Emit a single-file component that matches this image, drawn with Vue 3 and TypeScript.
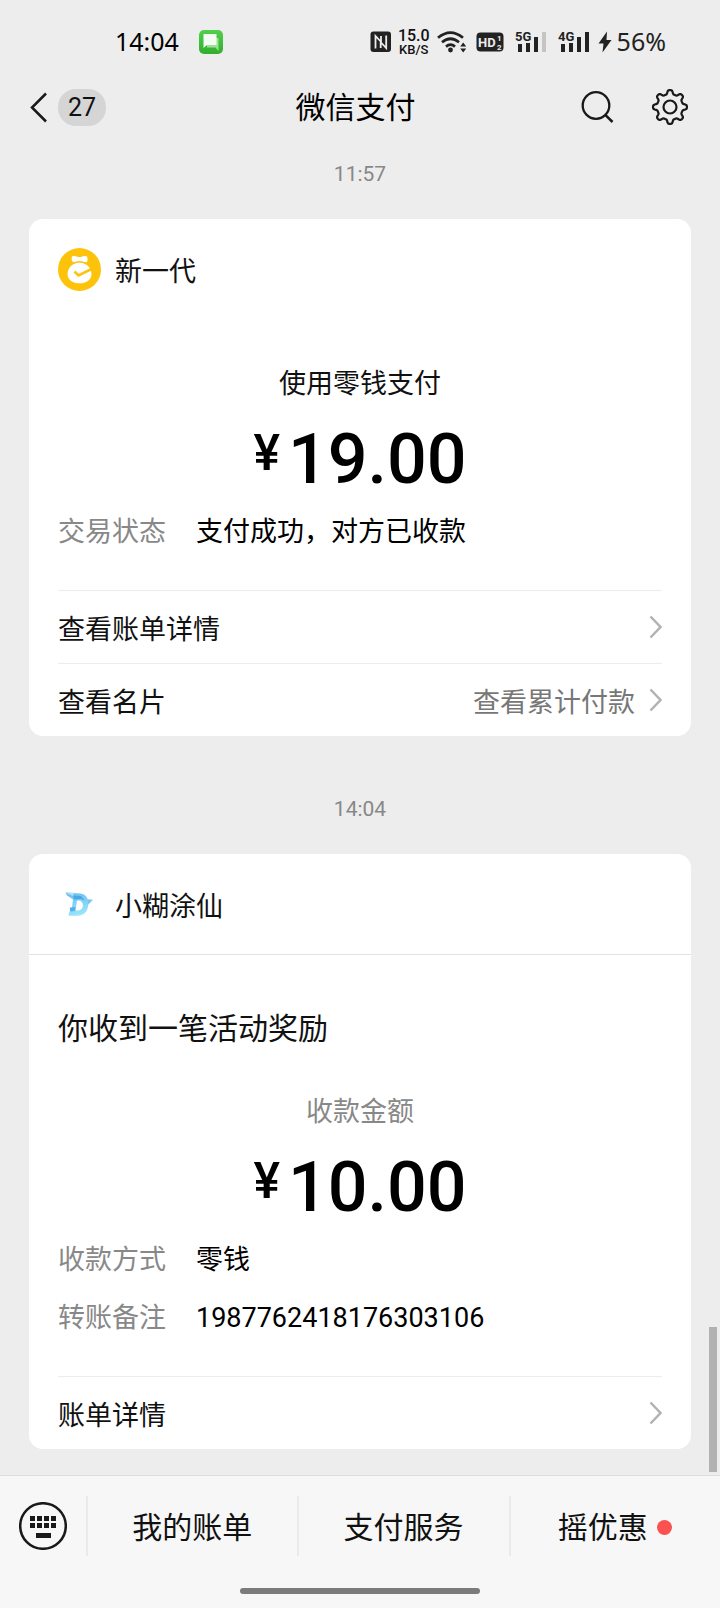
<script setup lang="ts">
interface Detail {
  label: string
  value: string
}

const receiptDetails: Detail[] = [
  { label: '收款方式', value: '零钱' },
  { label: '转账备注', value: '1987762418176303106' },
]

// Eight soft teeth around a circle centred on (20, 20).
const gearPath: string = (() => {
  const steps = 192
  const points: string[] = []
  for (let i = 0; i < steps; i++) {
    const a = (i / steps) * Math.PI * 2
    const r = 15 + 2.1 * Math.tanh(2 * (Math.cos(a * 8) - 0.15))
    points.push(`${(20 + r * Math.sin(a)).toFixed(2)} ${(20 - r * Math.cos(a)).toFixed(2)}`)
  }
  return `M${points.join('L')}Z`
})()

const keys: number[] = [0, 1, 2, 3]
</script>

<template>
  <div class="page">
    <div class="status">
      <span class="clock">14:04</span>
      <svg class="chat-badge" viewBox="0 0 24 24" width="24" height="24" aria-hidden="true">
        <defs>
          <linearGradient id="badge" x1="0" y1="0" x2="0" y2="1">
            <stop offset="0" stop-color="#52cf4c" />
            <stop offset="1" stop-color="#32ae2e" />
          </linearGradient>
        </defs>
        <rect width="24" height="24" rx="5" fill="url(#badge)" />
        <path d="M8 8h11.500v13l-3-3.500H8z" fill="#9be298" />
        <path d="M4.500 4h13v11H8l-3.500 3z" fill="#f3fdf3" />
      </svg>
      <div class="signals">
        <svg viewBox="0 0 22 22" width="22" height="22" aria-hidden="true">
          <rect x="0.500" y="0.500" width="20.500" height="20.500" rx="3" fill="#222" />
          <path d="M5.500 17.500V5l5.200 5.500V17M16.200 4.500V17L11 11.500V5" fill="none" stroke="#ededed" stroke-width="1.800" />
        </svg>
        <span class="speed"><span>15.0</span><span class="unit">KB/S</span></span>
        <svg viewBox="0 0 30 24" width="30" height="24" aria-hidden="true">
          <g fill="none" stroke="#222" stroke-width="2.700">
            <path d="M1 7.800Q13.500-2.500 26 7.800" />
            <path d="M5 12.300Q13.500 5.200 22 12.300" />
            <path d="M9 16.600Q13.500 12.800 18 16.600" />
          </g>
          <circle cx="13.500" cy="20" r="2.400" fill="#222" />
          <path d="M23.200 16.500l3-4 3 4zM23.200 18.500l3 4 3-4z" fill="#222" />
        </svg>
        <svg class="hd" viewBox="0 0 28 20" width="28" height="20" aria-hidden="true">
          <rect x="0.500" y="0.500" width="27" height="19" rx="4" fill="#222" />
          <text x="2" y="15" font-size="13" font-weight="700" fill="#ededed">HD</text>
          <text x="21" y="9" font-size="8" font-weight="700" fill="#ededed">1</text>
          <text x="21" y="18" font-size="8" font-weight="700" fill="#ededed">2</text>
        </svg>
        <svg class="bars" viewBox="0 -2 32 28" width="32" height="28" aria-hidden="true">
          <text x="0" y="11" font-size="13" font-weight="700" fill="#222">5G</text>
          <path d="M3 14h4v8h-4zM11 13h4v9h-4zM19 7h4v15h-4z" fill="#222" />
          <path d="M27 2h4v20h-4z" fill="#c4c4c4" />
        </svg>
        <svg class="bars" viewBox="0 -2 32 28" width="32" height="28" aria-hidden="true">
          <text x="0" y="11" font-size="13" font-weight="700" fill="#222">4G</text>
          <path d="M3 14h4v8h-4zM11 13h4v9h-4zM19 7h4v15h-4zM27 2h4v20h-4z" fill="#222" />
        </svg>
        <svg class="bolt" viewBox="0 0 14 22" width="14" height="22" aria-hidden="true">
          <path d="M9 0.500L0.500 12.500h5l-1 9L13.500 9H8.500z" fill="#222" />
        </svg>
        <span class="battery">56%</span>
      </div>
    </div>

    <header class="nav">
      <button class="back" type="button" aria-label="返回">
        <svg viewBox="0 0 18 32" width="18" height="32" aria-hidden="true">
          <path d="M17 2.500L3 16.500l14 14" fill="none" stroke="#191919" stroke-width="2.500" />
        </svg>
        <span class="count">27</span>
      </button>
      <h1>微信支付</h1>
      <div class="tools">
        <button type="button" aria-label="搜索">
          <svg viewBox="0 0 40 40" width="40" height="40" aria-hidden="true">
            <circle cx="18" cy="18.500" r="13.300" fill="none" stroke="#191919" stroke-width="2.300" />
            <path d="M27.300 27.800l7.200 7.200" stroke="#191919" stroke-width="2.500" />
          </svg>
        </button>
        <button type="button" aria-label="设置">
          <svg viewBox="0 0 40 40" width="40" height="40" aria-hidden="true">
            <path :d="gearPath" fill="none" stroke="#191919" stroke-width="2.200" stroke-linejoin="round" />
            <circle cx="20" cy="20" r="6.500" fill="none" stroke="#191919" stroke-width="2.200" />
          </svg>
        </button>
      </div>
    </header>

    <main class="chat">
      <time class="stamp">11:57</time>
      <article class="card">
        <div class="head">
          <svg viewBox="0 0 43 43" width="43" height="43" aria-hidden="true">
            <circle cx="21.500" cy="21.500" r="21.500" fill="#fdc30a" />
            <path d="M14 8.500c2.500-1.500 5 .6 7.300.6s5-2 7.700-.6c.8 1.700.8 4 0 5.600-2.500.9-4-.9-7.500-.9s-4.500 1.700-6.800.6c-1.200-1.600-1.300-3.700-.7-5.300z" fill="#fff" />
            <path d="M21.500 14.500c6 0 12 5 12 11.500 0 6-5.500 9.300-12 9.300s-12-3.300-12-9.300c0-6.500 6-11.500 12-11.500z" fill="#fff" />
            <path d="M14.500 15.500Q21.500 12 28.500 15.500" fill="none" stroke="#fdc30a" stroke-width="1.200" />
            <path d="M16.500 23.500l4 4L33.500 21" fill="none" stroke="#fdc30a" stroke-width="2.600" />
          </svg>
          <h2>新一代</h2>
        </div>
        <div class="body">
          <p class="caption">使用零钱支付</p>
          <p class="amount"><span class="yen">¥</span><span>19.00</span></p>
          <dl>
            <div class="detail"><dt>交易状态</dt><dd>支付成功，对方已收款</dd></div>
          </dl>
          <div class="links">
            <button class="link" type="button">
              <span class="name">查看账单详情</span>
              <svg viewBox="0 0 14 24" width="14" height="24" aria-hidden="true"><path d="M2.500 1.500L12.500 12 2.500 22.500" /></svg>
            </button>
            <button class="link" type="button">
              <span class="name">查看名片</span>
              <span class="extra">查看累计付款</span>
              <svg viewBox="0 0 14 24" width="14" height="24" aria-hidden="true"><path d="M2.500 1.500L12.500 12 2.500 22.500" /></svg>
            </button>
          </div>
        </div>
      </article>

      <time class="stamp later">14:04</time>
      <article class="card">
        <div class="head">
          <svg viewBox="0 0 43 43" width="43" height="43" aria-hidden="true">
            <defs>
              <linearGradient id="ice" x1="0" y1="0" x2="0.300" y2="1">
                <stop offset="0" stop-color="#68bdf0" />
                <stop offset="1" stop-color="#98e4fc" />
              </linearGradient>
            </defs>
            <path fill-rule="evenodd" fill="url(#ice)" d="M7.500 9.500L22 10.500c4 .3 6.500 2.500 7.800 5.800l5 .5-4.600 5c-.3 7-4.500 11-11.200 11h-8.500l.8-4.300 2.200-.5 1.500-11.500-6-4zM19 17.500l-1.500 9.700c5.200 1 7.400-1.700 7.400-5.300 0-3-2.200-4.900-5.900-4.400z" />
            <path d="M7.500 9.500l8.500.2-1 3.200z" fill="#b4e1fa" />
            <path d="M12 24.500l5.500-.5-.5 4-5 .5z" fill="#52b0ee" />
            <path d="M15 12.500l8 .5 4 4.500-4-1.500-7 .5z" fill="#4aa8e6" />
            <path d="M29.500 17l5.300-.2-4.800 4.500z" fill="#7cc3f0" />
          </svg>
          <h2>小糊涂仙</h2>
        </div>
        <div class="body ruled">
          <h3>你收到一笔活动奖励</h3>
          <p class="caption muted">收款金额</p>
          <p class="amount"><span class="yen">¥</span><span>10.00</span></p>
          <dl>
            <div v-for="item in receiptDetails" :key="item.label" class="detail">
              <dt>{{ item.label }}</dt>
              <dd>{{ item.value }}</dd>
            </div>
          </dl>
          <div class="links">
            <button class="link" type="button">
              <span class="name">账单详情</span>
              <svg viewBox="0 0 14 24" width="14" height="24" aria-hidden="true"><path d="M2.500 1.500L12.500 12 2.500 22.500" /></svg>
            </button>
          </div>
        </div>
      </article>
      <div class="thumb"></div>
    </main>

    <footer class="dock">
      <nav class="menu">
        <button class="keyboard" type="button" aria-label="键盘">
          <svg viewBox="0 0 48 48" width="48" height="48" aria-hidden="true">
            <circle cx="24" cy="24" r="22.800" fill="none" stroke="#191919" stroke-width="2.500" />
            <g fill="#191919">
              <rect v-for="k in keys" :key="'t' + k" :x="11 + k * 7" y="14" width="5" height="5" />
              <rect v-for="k in keys" :key="'b' + k" :x="11 + k * 7" y="21" width="5" height="5" />
              <rect x="17" y="31" width="15" height="5" />
            </g>
          </svg>
        </button>
        <button class="tab" type="button">我的账单</button>
        <button class="tab" type="button">支付服务</button>
        <button class="tab" type="button">摇优惠<span class="dot"></span></button>
      </nav>
      <div class="home"></div>
    </footer>
  </div>
</template>

<style>
html,
body {
  background: #ededed;
}
</style>

<style scoped>
.page {
  display: flex;
  flex-direction: column;
  min-height: 100vh;
  background: #ededed;
  color: #111;
  font-family: Roboto, "Noto Sans CJK SC", sans-serif;
  font-size: 27px;
  line-height: 36px;
}

h1,
h2,
h3,
p,
dl,
dd {
  margin: 0;
  font-size: inherit;
  font-weight: 400;
}

svg {
  display: block;
  flex: none;
}

button {
  margin: 0;
  padding: 0;
  border: 0;
  background: none;
  color: inherit;
  font: inherit;
  cursor: pointer;
}

.status {
  display: flex;
  align-items: center;
  height: 51px;
  padding: 16px 54px 0 115px;
  color: #111;
}

.clock,
.battery {
  padding-bottom: 2px;
  font-family: "Noto Sans", sans-serif;
  font-size: 25px;
}

.clock {
  color: #000;
}

.chat-badge {
  margin-left: 20px;
}

.signals {
  display: flex;
  flex: 1;
  align-items: center;
  justify-content: flex-end;
}

.speed {
  display: flex;
  flex-direction: column;
  align-items: center;
  margin: 0 7px 0 6px;
  font-size: 16px;
  font-weight: 500;
  line-height: 15px;
}

.unit {
  font-size: 13px;
  line-height: 13px;
}

.hd {
  margin-left: 9px;
}

.bars {
  margin-left: 11px;
}

.bolt {
  margin: 0 5px 0 8px;
}

.battery {
  color: #222;
}

.nav {
  display: grid;
  grid-template-columns: 1fr auto 1fr;
  align-items: center;
  height: 80px;
  padding: 0 30px 0 29px;
}

.back {
  display: flex;
  align-items: center;
  gap: 11px;
}

.count {
  padding: 1px 10px 0;
  border-radius: 18px;
  background: #d5d5d5;
  font-size: 25px;
}

.nav h1 {
  padding: 2px 8px 0 0;
  color: #000;
  font-size: 30px;
}

.tools {
  display: flex;
  justify-content: flex-end;
  gap: 32px;
}

.chat {
  position: relative;
  flex: 1;
  padding: 14px 29px 26px;
}

.stamp {
  display: block;
  margin-bottom: 32px;
  color: #888;
  font-size: 21px;
  line-height: 26px;
  text-align: center;
}

.later {
  margin-top: 60px;
}

.card {
  overflow: hidden;
  border-radius: 14px;
  background: #fff;
}

.head {
  display: flex;
  align-items: center;
  gap: 14px;
  height: 100px;
  padding: 0 29px;
}

.head h2,
.name,
.extra {
  padding-top: 6px;
}

.body {
  padding: 47px 29px 0;
}

.ruled {
  padding-top: 56px;
  border-top: 1px solid #e3e3e3;
}

.ruled h3 {
  margin-bottom: 47px;
  font-size: 30px;
}

.caption {
  text-align: center;
}

.muted {
  color: #888;
}

.amount {
  display: flex;
  align-items: flex-start;
  justify-content: center;
  gap: 8px;
  padding: 16px 0 14px;
  color: #000;
  font-size: 70px;
  font-weight: 500;
  line-height: 82px;
}

.yen {
  font-size: 50px;
  line-height: 70px;
}

.detail {
  display: flex;
}

.detail + .detail {
  margin-top: 22px;
}

.detail dt {
  flex: none;
  width: 138px;
  color: #888;
}

.detail dd {
  color: #000;
}

.links {
  margin-top: 40px;
}

.link {
  display: flex;
  align-items: center;
  width: 100%;
  height: 73px;
  border-top: 1px solid #ececec;
  text-align: left;
}

.name {
  flex: 1;
}

.link svg {
  fill: none;
  stroke: #b2b2b2;
  stroke-width: 2.5px;
}

.extra {
  margin-right: 13px;
  color: #777;
}

.thumb {
  position: absolute;
  right: 3px;
  bottom: 3px;
  width: 8px;
  height: 145px;
  background: #b2b2b2;
}

.dock {
  border-top: 1px solid #dcdcdc;
  background: #f7f7f7;
}

.menu {
  display: flex;
  align-items: center;
  height: 100px;
}

.keyboard {
  flex: none;
  padding: 0 19px;
}

.tab {
  display: flex;
  flex: 1;
  align-items: center;
  justify-content: center;
  gap: 9px;
  height: 60px;
  padding: 3px 1px 0 0;
  border-left: 2px solid #eaeaea;
  font-size: 30px;
}

.dot {
  width: 15px;
  height: 15px;
  border-radius: 50%;
  background: #fa5151;
}

.home {
  width: 33.333%;
  height: 6px;
  margin: 12px auto 14px;
  border-radius: 3px;
  background: #7b7b7b;
}
</style>
